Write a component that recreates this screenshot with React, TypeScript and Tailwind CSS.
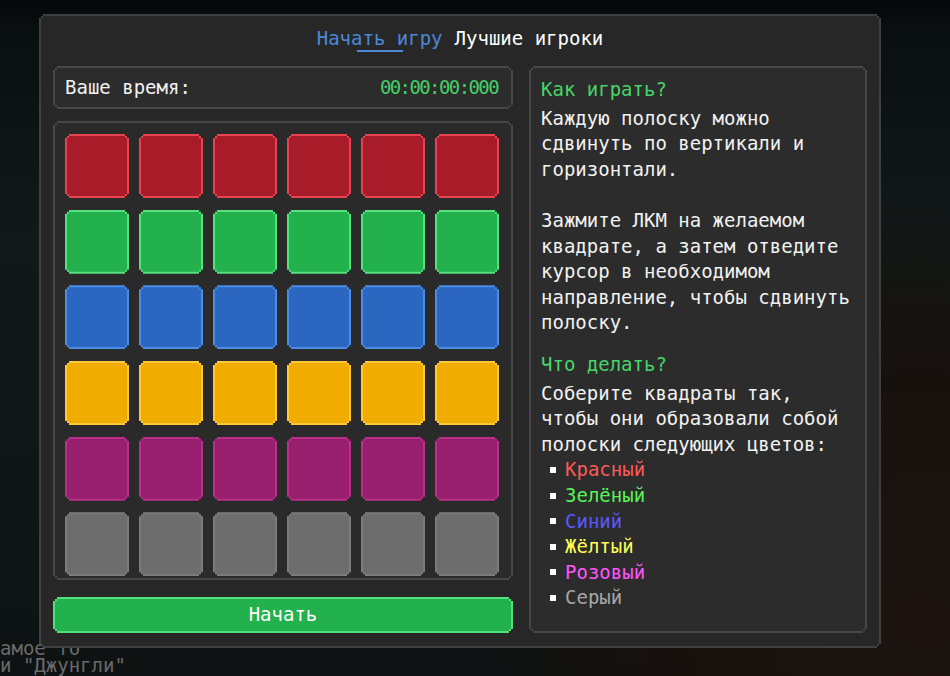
import type { ReactNode } from "react";

// stepped pixel corners: outer shape for the edge, inner shape for the fill
const notchOuter =
    "[clip-path:polygon(0_4px,2px_4px,2px_2px,4px_2px,4px_0,calc(100%_-_4px)_0,calc(100%_-_4px)_2px,calc(100%_-_2px)_2px,calc(100%_-_2px)_4px,100%_4px,100%_calc(100%_-_4px),calc(100%_-_2px)_calc(100%_-_4px),calc(100%_-_2px)_calc(100%_-_2px),calc(100%_-_4px)_calc(100%_-_2px),calc(100%_-_4px)_100%,4px_100%,4px_calc(100%_-_2px),2px_calc(100%_-_2px),2px_calc(100%_-_4px),0_calc(100%_-_4px))]";
const notchInner =
    "[clip-path:polygon(0_2px,2px_2px,2px_0,calc(100%_-_2px)_0,calc(100%_-_2px)_2px,100%_2px,100%_calc(100%_-_2px),calc(100%_-_2px)_calc(100%_-_2px),calc(100%_-_2px)_100%,2px_100%,2px_calc(100%_-_2px),0_calc(100%_-_2px))]";

function Frame({
    edge,
    fill,
    className = "",
    inner = "",
    children,
}: {
    edge: string;
    fill: string;
    className?: string;
    inner?: string;
    children?: ReactNode;
}) {
    return (
        <div className={`${notchOuter} p-[2px] ${edge} ${className}`}>
            <div className={`${notchInner} h-full w-full ${fill} ${inner}`}>{children}</div>
        </div>
    );
}

const rows = [
    { edge: "bg-[#e8434f]", fill: "bg-[#a81b29]" },
    { edge: "bg-[#55e17e]", fill: "bg-[#23b14d]" },
    { edge: "bg-[#4b8de6]", fill: "bg-[#2b66c1]" },
    { edge: "bg-[#ffc83a]", fill: "bg-[#f0ad00]" },
    { edge: "bg-[#b92f89]", fill: "bg-[#971f6e]" },
    { edge: "bg-[#7c7c7c]", fill: "bg-[#6d6d6d]" },
];

const colors = [
    { name: "Красный", cls: "text-[#ff5858]" },
    { name: "Зелёный", cls: "text-[#58f558]" },
    { name: "Синий", cls: "text-[#5a5aff]" },
    { name: "Жёлтый", cls: "text-[#ffff55]" },
    { name: "Розовый", cls: "text-[#ff55ff]" },
    { name: "Серый", cls: "text-[#a8a8a8]" },
];

export default function App() {
    return (
        <div className="relative h-[676px] w-[950px] overflow-hidden bg-[linear-gradient(180deg,#060808_0%,#0a0f0f_5%,#111a19_35%,#0f1716_70%,#0e1212_100%)] font-['DejaVu_Sans_Mono',monospace] text-[19px] leading-[25.6px] text-[#f2f2f2]">
            {/* game scene behind the window */}
            <div className="absolute inset-0 bg-[radial-gradient(circle_at_97%_92%,#1d1410_0%,#17110e_22%,transparent_40%)]"></div>
            <div className="absolute left-0 top-[640px] whitespace-nowrap leading-[17px] text-[#6a6a6a]">амое то</div>
            <div className="absolute left-0 top-[657px] whitespace-nowrap leading-[17px] text-[#6a6a6a]">и "Джунгли"</div>

            <Frame
                edge="bg-[#424242]/95"
                fill="bg-[#262626]/95"
                className="relative ml-[39px] mt-[14px] h-[634px] w-[842px]"
                inner="flex flex-col"
            >
                {/* tabs */}
                <div className="flex justify-center gap-[12px] pt-[12px]">
                    <div className="flex flex-col items-center">
                        <span className="leading-[20px] text-[#4d87d9]">Начать игру</span>
                        <span className="mt-[2px] h-[2px] w-[46px] bg-[#4d87d9]"></span>
                    </div>
                    <span className="leading-[20px] text-white">Лучшие игроки</span>
                </div>

                <div className="mt-[14px] flex gap-[16px] px-[12px]">
                    {/* board column */}
                    <div className="flex w-[460px] flex-col">
                        <Frame
                            edge="bg-[#474747]"
                            fill="bg-[#2c2c2c]"
                            className="h-[43px]"
                            inner="flex items-center justify-between pl-[10px] pr-[13px]"
                        >
                            <span>Ваше время:</span>
                            <span className="tracking-[-1.6px] text-[#43cf68]">00:00:00:000</span>
                        </Frame>

                        <Frame
                            edge="bg-[#474747]"
                            fill="bg-[#2a2a2a]"
                            className="mt-[12px] h-[459px]"
                            inner="grid grid-cols-[repeat(6,64px)] gap-[10px] pl-[10px] pt-[11px]"
                        >
                            {rows.map((row, r) =>
                                Array.from({ length: 6 }).map((_, c) => (
                                    <Frame key={`${r}-${c}`} edge={row.edge} fill={row.fill} className="h-[64px] w-[64px]" />
                                ))
                            )}
                        </Frame>

                        <Frame
                            edge="bg-[#52e07c]"
                            fill="bg-[#22b14c]"
                            className="mt-[17px] h-[36px]"
                            inner="flex items-center justify-center text-white"
                        >
                            Начать
                        </Frame>
                    </div>

                    {/* rules */}
                    <Frame
                        edge="bg-[#474747]"
                        fill="bg-[#2c2c2c]"
                        className="h-[567px] w-[338px]"
                        inner="whitespace-nowrap pl-[10px] pt-[9px]"
                    >
                        <div className="text-[#47d56a]">Как играть?</div>
                        <div className="mt-[3px]">
                            Каждую полоску можно
                            <br />
                            сдвинуть по вертикали и
                            <br />
                            горизонтали.
                        </div>
                        <div className="mt-[25.6px]">
                            Зажмите ЛКМ на желаемом
                            <br />
                            квадрате, а затем отведите
                            <br />
                            курсор в необходимом
                            <br />
                            направление, чтобы сдвинуть
                            <br />
                            полоску.
                        </div>
                        <div className="mt-[16px] text-[#47d56a]">Что делать?</div>
                        <div className="mt-[3px]">
                            Соберите квадраты так,
                            <br />
                            чтобы они образовали собой
                            <br />
                            полоски следующих цветов:
                        </div>
                        <ul>
                            {colors.map((item) => (
                                <li key={item.name} className="flex items-center gap-[9px] pl-[9px]">
                                    <span className="h-[6px] w-[6px] bg-white"></span>
                                    <span className={item.cls}>{item.name}</span>
                                </li>
                            ))}
                        </ul>
                    </Frame>
                </div>
            </Frame>
        </div>
    );
}
